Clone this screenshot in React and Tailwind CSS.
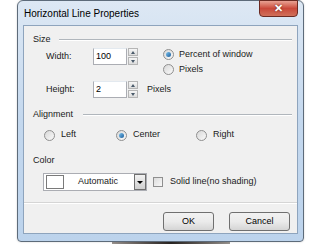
import React from 'react';

const font = { fontFamily: '"Liberation Sans", Arial, sans-serif' };

function Radio({ checked }) {
  return (
    <span className="relative inline-flex w-[11px] h-[11px] rounded-full border border-[#8f8f8f] bg-gradient-to-br from-[#d8d8d8] to-[#fafafa] items-center justify-center shrink-0">
      {checked && <span className="w-[5px] h-[5px] rounded-full bg-gradient-to-br from-[#7cc4f0] to-[#1a5d9a]" />}
    </span>
  );
}

function Spinner() {
  return (
    <div className="flex flex-col w-[10px] h-[17px] ml-px gap-px shrink-0">
      <div className="flex-1 border border-[#b5b5b5] bg-gradient-to-b from-[#f6f6f6] to-[#dcdcdc] flex items-center justify-center">
        <span className="w-0 h-0 border-l-[2.5px] border-r-[2.5px] border-b-[3px] border-l-transparent border-r-transparent border-b-[#4a5a6a]" />
      </div>
      <div className="flex-1 border border-[#b5b5b5] bg-gradient-to-b from-[#f6f6f6] to-[#dcdcdc] flex items-center justify-center">
        <span className="w-0 h-0 border-l-[2.5px] border-r-[2.5px] border-t-[3px] border-l-transparent border-r-transparent border-t-[#4a5a6a]" />
      </div>
    </div>
  );
}

function NumberBox({ value }) {
  return (
    <div className="flex items-center shrink-0">
      <div className="w-[34px] h-[17px] bg-white border border-[#abadb3] border-t-[#e3e9ef] pl-[2px] flex items-center text-black">
        {value}
      </div>
      <Spinner />
    </div>
  );
}

function GroupTitle({ label, lineStart }) {
  return (
    <div className="flex items-center h-[14px] pl-[9px] pr-[5px]">
      <span className={lineStart}>{label}</span>
      <div className="flex-1 h-px bg-[#b0b6bc] border-b border-white box-content" />
    </div>
  );
}

export default function App() {
  return (
    <div className="w-[320px] h-[244px] bg-white relative overflow-hidden text-[9px] text-[#1a1a1a]" style={font}>
      <div className="absolute left-[112px] top-[241px] w-[118px] h-[4px] bg-gradient-to-r from-[#9a9490] via-[#2a2522] to-[#9a9590]" />
      <div className="relative ml-[17px] w-[287px] h-[242px] border border-[#5d6b7a] rounded-t-[6px] rounded-b-[4px] bg-gradient-to-b from-[#dde8f4] via-[#c4d8ee] to-[#bcd3ec] flex flex-col px-[5px] pb-[7px] shadow-[0_0_2px_rgba(0,0,0,0.2)]">
        {/* title bar */}
        <div className="h-[24px] flex items-center pl-[1px] text-[10px] text-black">
          Horizontal Line Properties
        </div>
        <div className="absolute right-[5px] top-[-1px] w-[39px] h-[17px] rounded-b-[4px] border border-[#6b2a22] bg-gradient-to-b from-[#e8a193] via-[#c9483a] to-[#d0705a] flex items-center justify-center">
          <span className="text-white font-bold text-[11px] leading-none" style={{ textShadow: '0 0 2px #5a1a10' }}>✕</span>
        </div>

        {/* client */}
        <div className="flex-1 bg-[#f0f0f0] border border-[#8ea4bd] flex flex-col">
          <div className="h-[7px]" />
          <GroupTitle label="Size" lineStart="mr-[8px] w-[18px]" />

          <div className="flex h-[61px]">
            <div className="flex flex-col pl-[22px] w-[139px] shrink-0">
              <div className="flex items-center h-[17px] mt-[1px]">
                <span className="w-[47px] shrink-0">Width:</span>
                <NumberBox value="100" />
              </div>
              <div className="flex items-center h-[17px] mt-[16px]">
                <span className="w-[47px] shrink-0">Height:</span>
                <NumberBox value="2" />
                <span className="ml-[9px] shrink-0">Pixels</span>
              </div>
            </div>
            <div className="flex flex-col">
              <div className="flex items-center h-[15px] gap-[5px]">
                <Radio checked />
                <span>Percent of window</span>
              </div>
              <div className="flex items-center h-[15px] gap-[5px]">
                <Radio />
                <span>Pixels</span>
              </div>
            </div>
          </div>

          <GroupTitle label="Alignment" lineStart="mr-[10px] w-[40px]" />

          <div className="flex items-center h-[14px] mt-[6px] pl-[20px]">
            <div className="flex items-center gap-[6px] w-[72px]">
              <Radio />
              <span>Left</span>
            </div>
            <div className="flex items-center gap-[6px] w-[80px]">
              <Radio checked />
              <span>Center</span>
            </div>
            <div className="flex items-center gap-[6px]">
              <Radio />
              <span>Right</span>
            </div>
          </div>

          <div className="h-[14px] mt-[12px] pl-[9px] flex items-center">Color</div>

          <div className="flex items-center mt-[5px] pl-[19px] h-[18px]">
            <div className="w-[104px] h-[18px] bg-white border border-[#abadb3] flex items-center pl-[2px]">
              <div className="w-[18px] h-[14px] border border-[#7a7a7a] bg-white shrink-0" />
              <span className="ml-[14px] w-[56px] shrink-0">Automatic</span>
              <div className="w-[12px] h-[16px] border border-[#707070] bg-gradient-to-b from-[#f2f2f2] to-[#cfcfcf] flex items-center justify-center shrink-0">
                <span className="w-0 h-0 border-l-[3px] border-r-[3px] border-t-[3px] border-l-transparent border-r-transparent border-t-black" />
              </div>
            </div>
            <div className="ml-[6px] w-[10px] h-[10px] border border-[#8f8f8f] bg-gradient-to-br from-[#dcdcdc] to-[#f8f8f8]" />
            <span className="ml-[7px]">Solid line(no shading)</span>
          </div>

          <div className="mt-[11px] h-px bg-[#d5d5d5] border-b border-white box-content" />

          <div className="flex justify-end gap-[15px] pr-[7px] mt-[8px]">
            <div className="w-[51px] h-[19px] rounded-[3px] border border-[#707070] bg-gradient-to-b from-[#f2f2f2] via-[#ebebeb] to-[#d5d5d5] flex items-center justify-center text-black">
              OK
            </div>
            <div className="w-[61px] h-[19px] rounded-[3px] border border-[#707070] bg-gradient-to-b from-[#f2f2f2] via-[#ebebeb] to-[#d5d5d5] flex items-center justify-center text-black">
              Cancel
            </div>
          </div>
        </div>
      </div>
    </div>
  );
}
